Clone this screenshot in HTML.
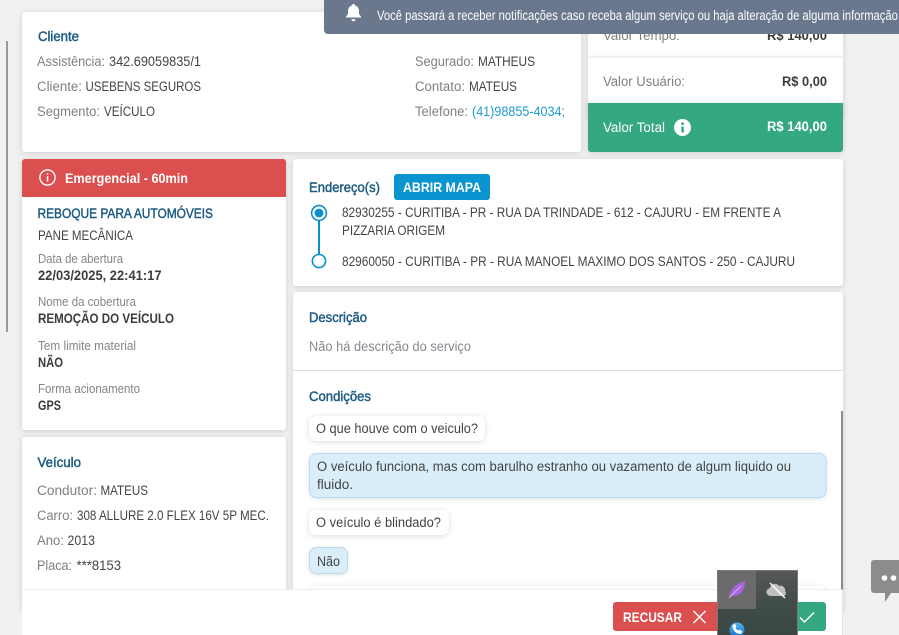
<!DOCTYPE html>
<html lang="pt-BR"><head><meta charset="utf-8"><title>Serviço</title>
<style>
html,body{margin:0;padding:0;width:899px;height:635px;overflow:hidden;background:#f1f1f1}
svg{display:block}
text{font-family:"Liberation Sans",sans-serif;font-size:13.5px;white-space:pre}
.l{fill:#808080}.v{fill:#444}
.t{fill:#1d5b82;stroke:#1d5b82;stroke-width:.45}
.b{fill:#3c3c3c;font-weight:700}
.s{font-size:12.5px;fill:#858585}
.w{fill:#fff;font-weight:700}
.c{fill:#fff;filter:drop-shadow(0 1px 3px rgba(0,0,0,.14))}
</style></head><body>
<svg width="899" height="635" viewBox="0 0 899 635" xmlns="http://www.w3.org/2000/svg">
<rect x="6" y="41" width="2" height="291" fill="#9a9a9a"/>

<!-- Cards -->
<rect class="c" x="22" y="12" width="559" height="140" rx="3"/>
<rect class="c" x="588" y="0" width="255" height="56"/>
<rect class="c" x="588" y="58" width="255" height="60"/>
<path d="M588 103H843V149a3 3 0 0 1-3 3H591a3 3 0 0 1-3-3Z" fill="#34a87f" style="filter:drop-shadow(0 1px 3px rgba(0,0,0,.14))"/>
<rect class="c" x="22" y="159" width="264" height="271" rx="3"/>
<path d="M22 197V162a3 3 0 0 1 3-3H283a3 3 0 0 1 3 3V197Z" fill="#dc4f4f"/>
<rect class="c" x="22" y="437" width="264" height="175" rx="3"/>
<rect class="c" x="293" y="159" width="550" height="127" rx="3"/>
<rect class="c" x="293" y="292" width="550" height="320" rx="3"/>
<rect x="293" y="370" width="550" height="1" fill="#dcdcdc"/>
<rect x="841" y="411" width="2" height="179" fill="#8a8d92"/>

<!-- Cliente -->
<text class="t" x="38" y="41" textLength="41" lengthAdjust="spacingAndGlyphs">Cliente</text>
<text class="l" x="37" y="66" textLength="68" lengthAdjust="spacingAndGlyphs">Assistência:</text>
<text class="v" x="109" y="66" textLength="92" lengthAdjust="spacingAndGlyphs">342.69059835/1</text>
<text class="l" x="37" y="91" textLength="45" lengthAdjust="spacingAndGlyphs">Cliente:</text>
<text class="v" x="85.5" y="91" textLength="115.5" lengthAdjust="spacingAndGlyphs">USEBENS SEGUROS</text>
<text class="l" x="37" y="116" textLength="63" lengthAdjust="spacingAndGlyphs">Segmento:</text>
<text class="v" x="104" y="116" textLength="51" lengthAdjust="spacingAndGlyphs">VEÍCULO</text>
<text class="l" x="415" y="66" textLength="59" lengthAdjust="spacingAndGlyphs">Segurado:</text>
<text class="v" x="478" y="66" textLength="57" lengthAdjust="spacingAndGlyphs">MATHEUS</text>
<text class="l" x="415" y="91" textLength="50" lengthAdjust="spacingAndGlyphs">Contato:</text>
<text class="v" x="469" y="91" textLength="48" lengthAdjust="spacingAndGlyphs">MATEUS</text>
<text class="l" x="415" y="116" textLength="53" lengthAdjust="spacingAndGlyphs">Telefone:</text>
<text x="472" y="116" fill="#1f9bd1" textLength="93" lengthAdjust="spacingAndGlyphs">(41)98855-4034;</text>

<!-- Valores -->
<text class="l" x="603" y="40" textLength="77" lengthAdjust="spacingAndGlyphs">Valor Tempo:</text>
<text class="b" x="767" y="40" textLength="60" lengthAdjust="spacingAndGlyphs">R$ 140,00</text>
<rect x="588" y="56" width="255" height="2" fill="#f1f1f1"/>
<text class="l" x="603" y="86" textLength="82" lengthAdjust="spacingAndGlyphs">Valor Usuário:</text>
<text class="b" x="782" y="86" textLength="45" lengthAdjust="spacingAndGlyphs">R$ 0,00</text>
<text x="603" y="132" fill="#fff" textLength="62" lengthAdjust="spacingAndGlyphs">Valor Total</text>
<circle cx="682.5" cy="127.5" r="8.5" fill="#fff"/>
<rect x="681.4" y="126.5" width="2.4" height="6" fill="#34a87f"/>
<circle cx="682.6" cy="123.6" r="1.4" fill="#34a87f"/>
<text class="w" x="767" y="131" textLength="60" lengthAdjust="spacingAndGlyphs">R$ 140,00</text>

<!-- Emergencial -->
<circle cx="47.5" cy="177.5" r="7.6" fill="none" stroke="#fff" stroke-width="1.4"/>
<rect x="46.8" y="176.2" width="1.5" height="5.3" fill="#fff"/>
<rect x="46.8" y="173.2" width="1.5" height="1.6" fill="#fff"/>
<text class="w" x="65" y="183" textLength="123" lengthAdjust="spacingAndGlyphs">Emergencial - 60min</text>

<!-- Detalhes -->
<text class="t" x="37.5" y="218" textLength="175.5" lengthAdjust="spacingAndGlyphs">REBOQUE PARA AUTOMÓVEIS</text>
<text class="v" x="38" y="240" textLength="95" lengthAdjust="spacingAndGlyphs">PANE MECÂNICA</text>
<text class="s" x="38" y="263" textLength="85" lengthAdjust="spacingAndGlyphs">Data de abertura</text>
<text class="b" x="38" y="280" textLength="123.5" lengthAdjust="spacingAndGlyphs">22/03/2025, 22:41:17</text>
<text class="s" x="38" y="306" textLength="98" lengthAdjust="spacingAndGlyphs">Nome da cobertura</text>
<text class="b" x="38" y="323" textLength="136" lengthAdjust="spacingAndGlyphs">REMOÇÃO DO VEÍCULO</text>
<text class="s" x="38" y="350" textLength="98" lengthAdjust="spacingAndGlyphs">Tem limite material</text>
<text class="b" x="38" y="367" textLength="25" lengthAdjust="spacingAndGlyphs">NÃO</text>
<text class="s" x="38" y="393" textLength="102" lengthAdjust="spacingAndGlyphs">Forma acionamento</text>
<text class="b" x="38" y="410" textLength="23" lengthAdjust="spacingAndGlyphs">GPS</text>

<!-- Veículo -->
<text class="t" x="37.5" y="467" textLength="43.5" lengthAdjust="spacingAndGlyphs">Veículo</text>
<text class="l" x="37" y="495" textLength="60" lengthAdjust="spacingAndGlyphs">Condutor:</text>
<text class="v" x="100.5" y="495" textLength="47.5" lengthAdjust="spacingAndGlyphs">MATEUS</text>
<text class="l" x="37" y="520" textLength="36" lengthAdjust="spacingAndGlyphs">Carro:</text>
<text class="v" x="77" y="520" textLength="192" lengthAdjust="spacingAndGlyphs">308 ALLURE 2.0 FLEX 16V 5P MEC.</text>
<text class="l" x="37" y="545" textLength="27" lengthAdjust="spacingAndGlyphs">Ano:</text>
<text class="v" x="67.5" y="545" textLength="27.5" lengthAdjust="spacingAndGlyphs">2013</text>
<text class="l" x="37" y="570" textLength="35" lengthAdjust="spacingAndGlyphs">Placa:</text>
<text class="v" x="76.5" y="570" textLength="44.5" lengthAdjust="spacingAndGlyphs">***8153</text>

<!-- Endereços -->
<text class="t" x="309" y="192" textLength="71" lengthAdjust="spacingAndGlyphs">Endereço(s)</text>
<rect x="394" y="174" width="96" height="26" rx="3" fill="#0a94d0"/>
<text class="w" x="403" y="192" textLength="78" lengthAdjust="spacingAndGlyphs">ABRIR MAPA</text>
<path d="M319 221V254" stroke="#0a8fcb" stroke-width="2" fill="none"/>
<circle cx="319" cy="213" r="7.4" fill="none" stroke="#0a8fcb" stroke-width="1.6"/>
<circle cx="319" cy="213" r="4.4" fill="#0a8fcb"/>
<circle cx="319" cy="261" r="6.6" fill="#fff" stroke="#0a8fcb" stroke-width="1.6"/>
<text class="v" x="342" y="217" textLength="439" lengthAdjust="spacingAndGlyphs">82930255 - CURITIBA - PR - RUA DA TRINDADE - 612 - CAJURU - EM FRENTE A</text>
<text class="v" x="342" y="235" textLength="103" lengthAdjust="spacingAndGlyphs">PIZZARIA ORIGEM</text>
<text class="v" x="342" y="266" textLength="453" lengthAdjust="spacingAndGlyphs">82960050 - CURITIBA - PR - RUA MANOEL MAXIMO DOS SANTOS - 250 - CAJURU</text>

<!-- Descrição -->
<text class="t" x="309" y="322" textLength="58" lengthAdjust="spacingAndGlyphs">Descrição</text>
<text x="309" y="351" fill="#868b90" textLength="162" lengthAdjust="spacingAndGlyphs">Não há descrição do serviço</text>

<!-- Condições -->
<text class="t" x="309" y="401" textLength="62" lengthAdjust="spacingAndGlyphs">Condições</text>
<rect class="c" x="309" y="416" width="176" height="25" rx="7"/>
<text class="v" x="316" y="433" textLength="162" lengthAdjust="spacingAndGlyphs">O que houve com o veiculo?</text>
<rect x="309.5" y="453.5" width="516.500" height="44" rx="7" fill="#d9eef8" stroke="#b9dcec" style="filter:drop-shadow(0 1px 2px rgba(0,0,0,.12))"/>
<text class="v" x="317" y="471" textLength="474" lengthAdjust="spacingAndGlyphs">O veículo funciona, mas com barulho estranho ou vazamento de algum liquido ou</text>
<text class="v" x="317" y="489" textLength="36" lengthAdjust="spacingAndGlyphs">fluido.</text>
<rect class="c" x="309" y="510" width="140" height="25" rx="7"/>
<text class="v" x="316" y="527" textLength="125" lengthAdjust="spacingAndGlyphs">O veículo é blindado?</text>
<rect x="309.5" y="547.5" width="38" height="26" rx="7" fill="#d9eef8" stroke="#b9dcec" style="filter:drop-shadow(0 1px 2px rgba(0,0,0,.12))"/>
<text class="v" x="317" y="566" textLength="23" lengthAdjust="spacingAndGlyphs">Não</text>
<rect class="c" x="309" y="586" width="517" height="20" rx="7"/>

<!-- Rodapé -->
<rect x="22" y="589" width="820" height="46" fill="#fff"/>
<rect x="22" y="589" width="820" height="1" fill="#ececec"/>
<rect x="842" y="590" width="1" height="45" fill="#e4e4e4"/>
<rect x="613" y="602" width="110" height="29" rx="3" fill="#dc4f4f"/>
<text class="w" x="623" y="622" textLength="59" lengthAdjust="spacingAndGlyphs">RECUSAR</text>
<path d="M693.500 611 705.500 623M705.500 611 693.500 623" stroke="#fff" stroke-width="1.500" fill="none"/>
<rect x="785" y="602" width="41" height="29" rx="3" fill="#34a87f"/>
<path d="M800 617.500 804.500 622 814 612.500" stroke="#fff" stroke-width="1.500" fill="none"/>

<!-- Bandeja -->
<defs><linearGradient id="g" x1="0" y1="0" x2="0" y2="1"><stop offset="0" stop-color="#585858"/><stop offset=".55" stop-color="#3f4c47"/><stop offset="1" stop-color="#3a4744"/></linearGradient>
<linearGradient id="p" x1="0" y1="0" x2="0" y2="1"><stop offset="0" stop-color="#58b4f2"/><stop offset="1" stop-color="#0b6fd0"/></linearGradient></defs>
<rect x="717" y="570" width="80" height="65" fill="url(#g)"/>
<path d="M717.500 635V570.500H797.500V635" fill="none" stroke="#7a7a7a"/>
<rect x="718" y="571" width="38" height="38" fill="#6b6b6b"/>
<path d="M729 597C730 589 737 583 745 581C745 587 743 593 738 595C735 596 732 595 729 597Z" fill="#a865e0"/>
<path d="M729 598 741 586" stroke="#e4c8f8" stroke-width=".8"/>
<path d="M771 596a4 4 0 0 1-1-8 5 5 0 0 1 9-2 4.500 4.500 0 0 1 6 5 3 3 0 0 1-1 5Z" fill="#c0c0c0"/>
<path d="M770 583 785 598" stroke="#fff" stroke-width="1.300"/>
<circle cx="737" cy="630" r="7.500" fill="url(#p)"/>
<path d="M732.500 625.500c0 5 3.500 8.500 8.500 8.500l1.500-2.500-3-2-1.300 1c-1.200-.5-2.200-1.700-2.700-2.900l1-1.200-1.800-2.900Z" fill="#fff"/>

<!-- Chat -->
<path d="M874 560H899V593H891L885 602V593H874a3 3 0 0 1-3-3V563a3 3 0 0 1 3-3Z" fill="#8c8c8c"/>
<circle cx="884.500" cy="578" r="2.800" fill="#fff"/>
<circle cx="893.500" cy="578" r="2.800" fill="#fff"/>

<!-- Notificação -->
<path d="M324 0H899V34H328a4 4 0 0 1-4-4Z" fill="#6b778d"/>
<path d="M353.500 4a1.500 1.500 0 0 1 1.500 1.500c3 .8 4 3.200 4 6v2.500l2 2.500v1H346v-1l2-2.500v-2.500c0-2.800 1-5.200 4-6A1.500 1.500 0 0 1 353.500 4Z" fill="#fff"/>
<path d="M351.500 19.300h4a2 2 0 0 1-4 0Z" fill="#fff"/>
<text x="377" y="20" fill="#fff" textLength="524" lengthAdjust="spacingAndGlyphs">Você passará a receber notificações caso receba algum serviço ou haja alteração de alguma informação.</text>
</svg>
</body></html>
